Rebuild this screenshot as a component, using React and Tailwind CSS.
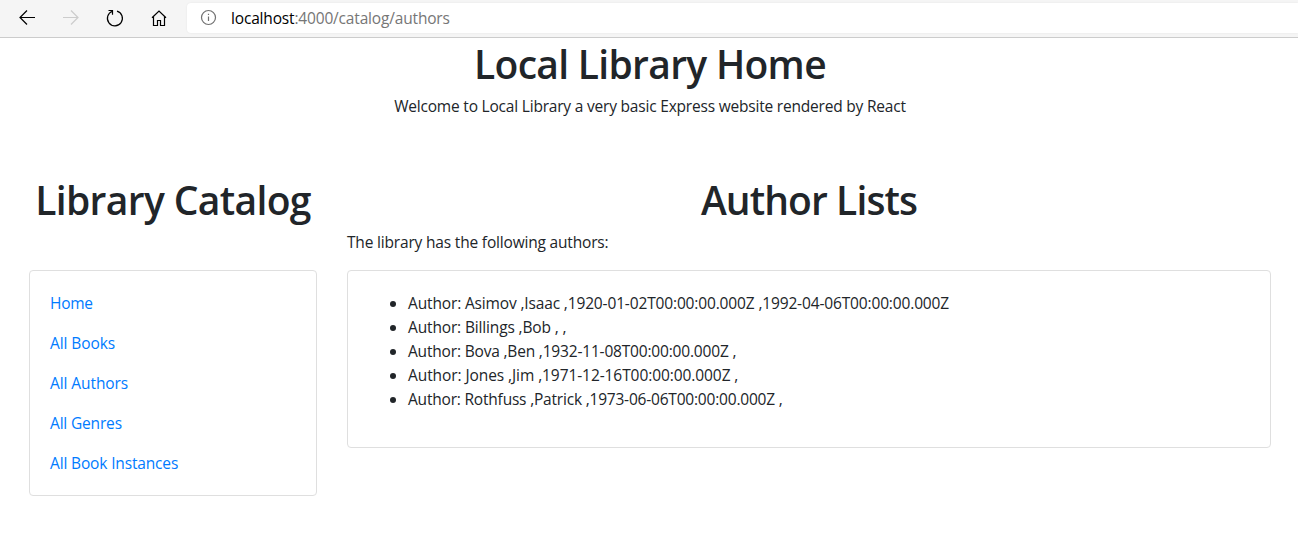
const links = [
  ["Home", "tracking-[-0.3px]"],
  ["All Books", "tracking-[-0.08px]"],
  ["All Authors", "tracking-[-0.08px]"],
  ["All Genres", "tracking-[-0.17px]"],
  ["All Book Instances", "tracking-[-0.15px]"],
];

const authors = [
  ["Author: Asimov ,Isaac ,1920-01-02T00:00:00.000Z ,1992-04-06T00:00:00.000Z", "tracking-[-0.145px]"],
  ["Author: Billings ,Bob , ,", "tracking-[-0.15px]"],
  ["Author: Bova ,Ben ,1932-11-08T00:00:00.000Z ,", "tracking-[-0.18px]"],
  ["Author: Jones ,Jim ,1971-12-16T00:00:00.000Z ,", "tracking-[-0.08px]"],
  ["Author: Rothfuss ,Patrick ,1973-06-06T00:00:00.000Z ,", "tracking-[-0.2px]"],
];

function Icon({ className, children }) {
  return (
    <svg
      className={`h-5 w-5 shrink-0 ${className}`}
      viewBox="0 0 20 20"
      fill="none"
      stroke="currentColor"
      strokeWidth="1.2"
    >
      {children}
    </svg>
  );
}

function Toolbar() {
  return (
    <header className="flex h-[38px] items-start border-b border-[#cccccc] bg-[#f5f5f5] pt-[3px]">
      <div className="flex w-[187px] shrink-0 gap-6 pt-[5px] pl-[17px]">
        <Icon className="text-black">
          <path d="M18 9.5H3M10 2.5L3 9.5L10 16.5" />
        </Icon>
        <Icon className="text-[#cccccc]">
          <path d="M2 9.5H17M10 2.5L17 9.5L10 16.5" />
        </Icon>
        <Icon className="text-black">
          <path d="M12 3.1A7.5 7.5 0 1 1 7.5 3.2M3.5 2.5H7.5V6.8" />
        </Icon>
        <Icon className="text-black">
          <path d="M3 9.8L10 3L17 9.8M4.5 8.5V17.5H8.5V12.5H11.5V17.5H15.5V8.5" />
        </Icon>
      </div>
      <div className="flex h-[30px] flex-1 items-center rounded-l bg-white pl-3 shadow-[0_0_2px_rgba(0,0,0,0.08)]">
        <Icon className="text-[#707070]">
          <circle cx="9.5" cy="9.5" r="7" />
          <path d="M9.5 8.5V13M9.5 5.8V7" />
        </Icon>
        <span className="ml-3 text-[15.5px] leading-[30px] tracking-[-0.17px] whitespace-nowrap text-[#767676]">
          <span className="text-black">localhost</span>:4000/catalog/authors
        </span>
      </div>
    </header>
  );
}

function Heading({ children, className }) {
  return (
    <h1 className={`text-center text-[39px] leading-[52px] font-semibold whitespace-nowrap ${className}`}>
      {children}
    </h1>
  );
}

export default function App() {
  return (
    <div className="h-[544px] overflow-hidden bg-white font-['Open_Sans','Noto_Sans',sans-serif] text-[15.5px] leading-6 text-[#212529]">
      <Toolbar />
      <section className="pl-[2px] text-center">
        <Heading className="tracking-[-0.7px]">Local Library Home</Heading>
        <p className="mt-1 tracking-[-0.2px]">Welcome to Local Library a very basic Express website rendered by React</p>
      </section>
      <main className="mt-14 flex items-start gap-[30px] pl-[29px]">
        <aside className="w-72">
          <Heading className="tracking-[-0.65px]">Library Catalog</Heading>
          <nav className="mt-11 flex flex-col items-start gap-4 rounded border border-[#dfdfdf] p-5">
            {links.map(([label, spacing]) => (
              <a key={label} href="#" className={`text-[#007bff] ${spacing}`}>
                {label}
              </a>
            ))}
          </nav>
        </aside>
        <section className="w-[924px]">
          <Heading className="tracking-[-0.9px]">Author Lists</Heading>
          <p className="mt-1 mb-4 tracking-[-0.18px]">The library has the following authors:</p>
          <div className="rounded border border-[#dfdfdf] p-5">
            <ul className="mb-4 list-disc pl-10">
              {authors.map(([text, spacing]) => (
                <li key={text}>
                  <span className={spacing}>{text}</span>
                </li>
              ))}
            </ul>
          </div>
        </section>
      </main>
    </div>
  );
}
